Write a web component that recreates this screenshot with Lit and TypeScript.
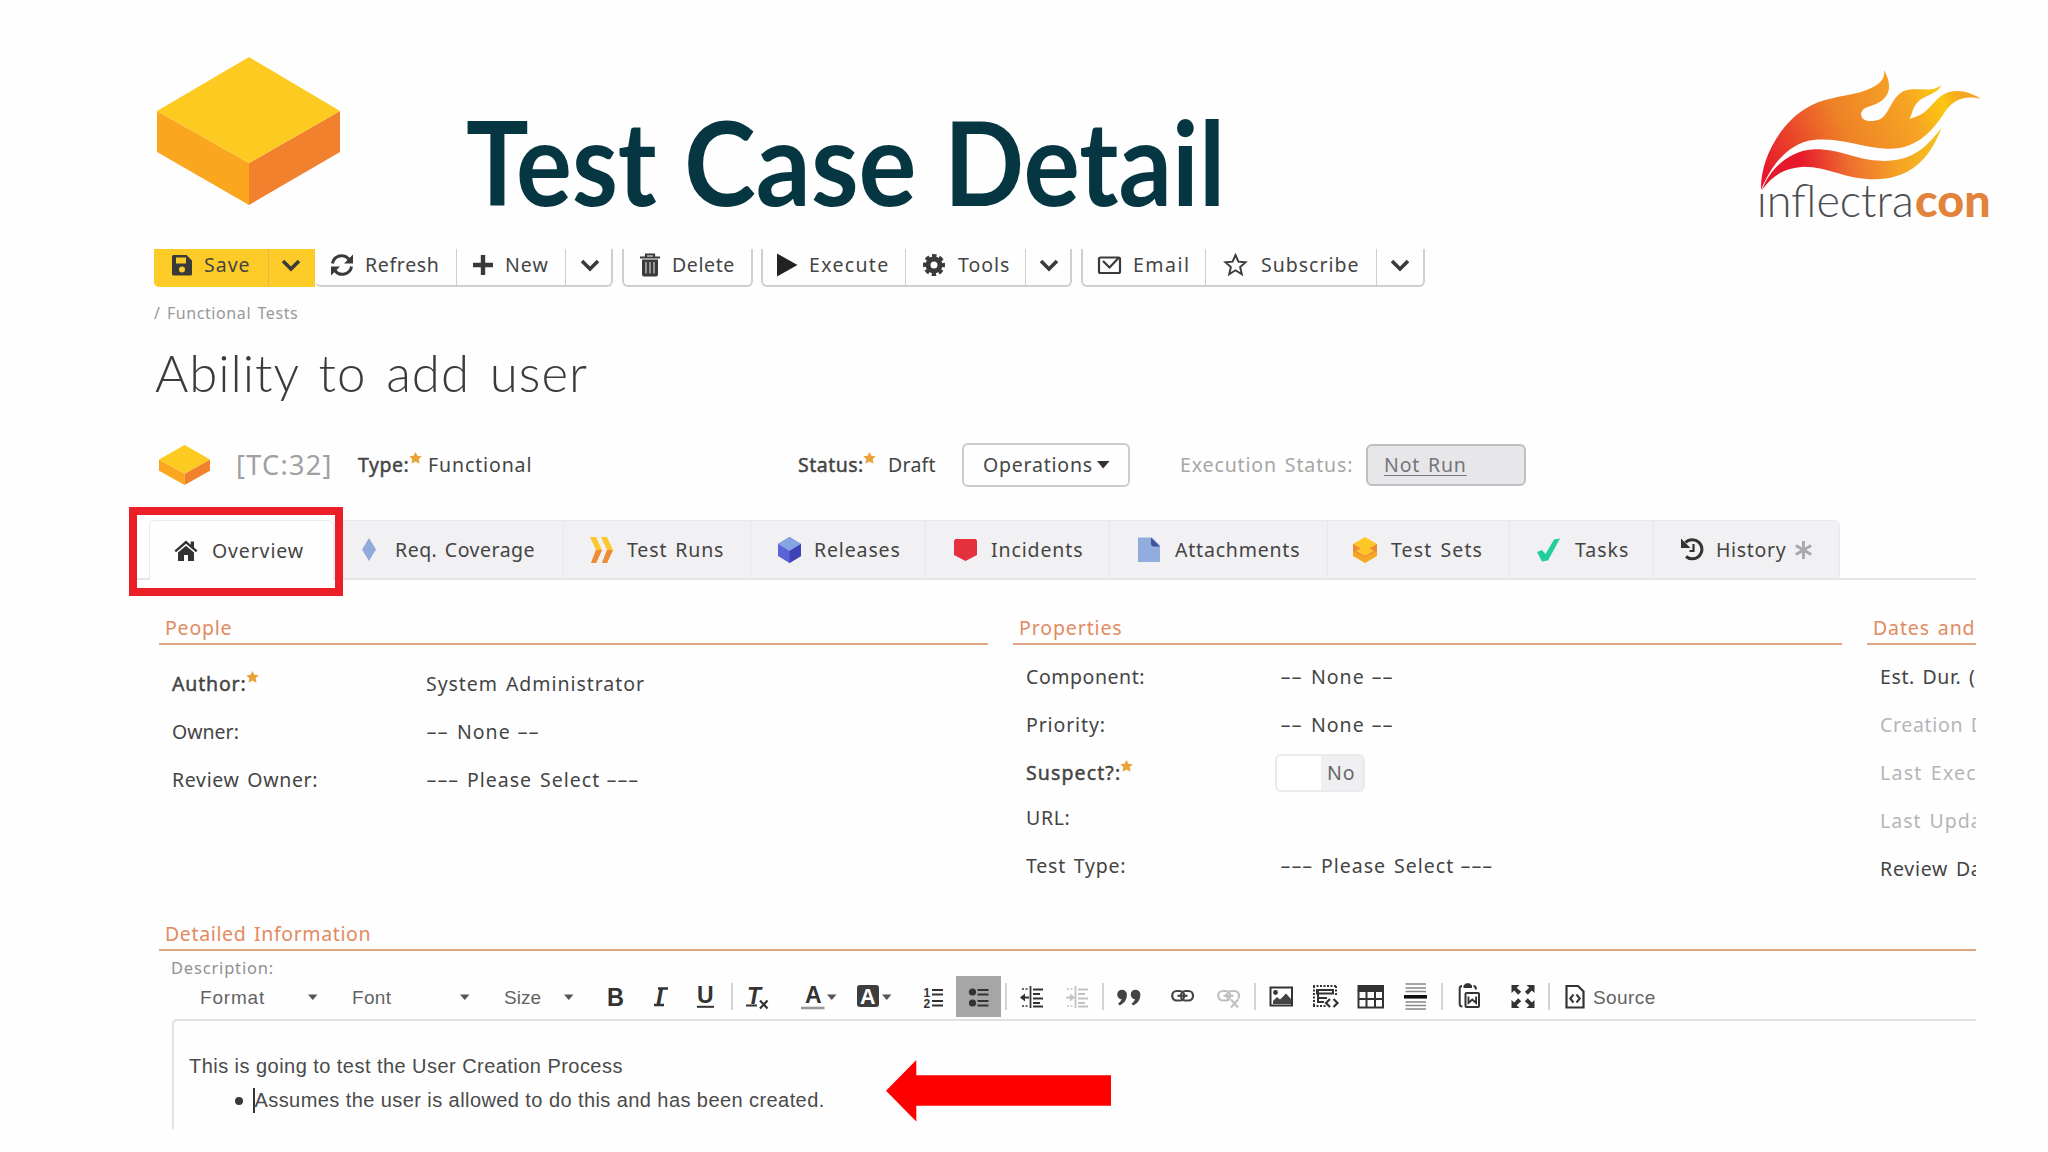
import { LitElement, html, svg, css } from "lit";
import { customElement, property } from "lit/decorators.js";
import { styleMap } from "lit/directives/style-map.js";

/** Single-line text tracked (or stretched) so that it fills a given width. */
@customElement("fit-text")
class FitText extends LitElement {
  @property() text = "";
  @property({ type: Number }) w = 0;
  @property({ type: Boolean }) stretch = false;

  static styles = css`
    :host { display: inline-block; flex: none; white-space: pre; word-spacing: 0.1em; }
    .run { display: inline-block; margin-left: -1px; transform-origin: 0 50%; text-decoration: inherit; }
  `;

  updated() {
    const run = this.renderRoot.querySelector(".run") as HTMLElement;
    this.style.width = this.w + "px";
    run.style.letterSpacing = "0px";
    run.style.transform = "none";
    const natural = run.offsetWidth;
    if (this.stretch) run.style.transform = `scaleX(${this.w / natural})`;
    else run.style.letterSpacing = (this.w + 1 - natural) / Math.max(1, this.text.length - 1) + "px";
  }

  render() {
    return html`<span class="run">${this.text}</span>`;
  }
}

const t = (text: string, w: number, cls = "") => html`<fit-text class=${cls} .text=${text} .w=${w}></fit-text>`;
const wide = (text: string, w: number) => html`<fit-text .text=${text} .w=${w} stretch></fit-text>`;
const dashed = (dashes: string, dw: number, text: string, w: number) =>
  html`<div class="dashed">${wide(dashes, dw)}${t(text, w)}${wide(dashes, dw)}</div>`;
const none = () => dashed("--", 23, "None", 52);
const select = () => dashed("---", 33, "Please Select", 131);

const INK = "#3a3a3a";

const chevron = svg`<path d="M2 8l8 8 8-8" fill="none" stroke=${INK} stroke-width="3.6"/>`;
const starIcon = html`<svg class="req" width="13" height="12" viewBox="0 0 13 12"><path d="M6.5 0l1.9 3.8 4.3.5-3 2.9.8 4.6-4-2.2-4 2.2.8-4.6-3-2.9 4.3-.5z" fill="#e8a33a"/></svg>`;

const barIcons: Record<string, unknown> = {
  save: svg`<path d="M1.5 2h13L20 7.500V21q0 1.500-1.500 1.500h-17Q0 22.500 0 21V3.500Q0 2 1.500 2z" fill=${INK}/><path d="M4 4.500h10v6H4z" fill="#fdcb27"/><circle cx="10" cy="16.500" r="3" fill="#fdcb27"/>`,
  refresh: svg`<g fill="none" stroke=${INK} stroke-width="3"><path d="M2.500 10.500A9.200 9.200 0 0 1 19 6.500"/><path d="M21.500 13.500A9.200 9.200 0 0 1 5 17.500"/></g><path d="M23 1.500v9h-9zM1 22.500v-9h9z" fill=${INK}/>`,
  plus: svg`<path d="M10 2v20M0 12h20" stroke=${INK} stroke-width="4.400"/>`,
  trash: svg`<path d="M0 4.500h20M6 4V1.500h8V4" fill="none" stroke=${INK} stroke-width="2.200"/><path d="M2 6.500h16v15q0 2-2 2H4q-2 0-2-2z" fill=${INK}/><path d="M6 9v11.500M10 9v11.500M14 9v11.500" stroke="#bbb" stroke-width="1.400"/>`,
  play: svg`<path d="M0 0.500L20.500 12 0 23.500z" fill="#222"/>`,
  gear: svg`<circle cx="11" cy="12" r="6" fill="none" stroke=${INK} stroke-width="5"/><circle cx="11" cy="12" r="9.200" fill="none" stroke=${INK} stroke-width="3.600" stroke-dasharray="4.400 2.825" stroke-dashoffset="2.200"/>`,
  mail: svg`<rect x="1" y="4.500" width="21" height="15.500" rx="1.500" fill="none" stroke=${INK} stroke-width="2.200"/><path d="M5 8l6.500 6.500L20.500 5" fill="none" stroke=${INK} stroke-width="2.200"/>`,
  star: svg`<path d="M11.500 2l2.900 6.600 7.200.6-5.500 4.800 1.700 7.200-6.300-3.900-6.300 3.900 1.700-7.200L1.400 9.200l7.200-.6z" fill="none" stroke=${INK} stroke-width="1.900"/>`,
};

interface Btn { icon?: string; pad: number; iw: number; label?: string; lw?: number; w: number; }

const groups: { gap: number; left: boolean; items: Btn[] }[] = [
  { gap: 0, left: false, items: [
    { icon: "refresh", pad: 15, iw: 36, label: "Refresh", lw: 73, w: 142 },
    { icon: "plus", pad: 16, iw: 33, label: "New", lw: 42, w: 109 },
    { pad: 14, iw: 20, w: 45 } ] },
  { gap: 9, left: true, items: [{ icon: "trash", pad: 16, iw: 33, label: "Delete", lw: 61, w: 127 }] },
  { gap: 8, left: true, items: [
    { icon: "play", pad: 14, iw: 33, label: "Execute", lw: 78, w: 143 },
    { icon: "gear", pad: 17, iw: 36, label: "Tools", lw: 50, w: 120 },
    { pad: 13, iw: 20, w: 44 } ] },
  { gap: 9, left: true, items: [
    { icon: "mail", pad: 15, iw: 36, label: "Email", lw: 55, w: 123 },
    { icon: "star", pad: 18, iw: 38, label: "Subscribe", lw: 97, w: 171 },
    { pad: 13, iw: 20, w: 46 } ] },
];

const tabIcons: Record<string, unknown> = {
  home: svg`<path d="M12 2.500L.5 12.500l1.500 1.700L12 5.700l10 8.500 1.500-1.700-3.500-3V3.500h-3.300v3.200z" fill="#333"/><path d="M4 14.500l8-6.700 8 6.700V23h-6v-6h-4v6H4z" fill="#333"/>`,
  req: svg`<path d="M7 1l7 11.500L7 24 0 12.500z" fill="#92a9dc"/>`,
  runs: svg`<path d="M0 0h6l6 13-6 13H1l5-13zM11 0h6l6 13-6 13h-5l5-13z" fill="#fcc72e"/><path d="M6 13h6l-6 13H1zM17 13h6l-6 13h-5z" fill="#ee8a3a"/>`,
  release: svg`<path d="M11.500 0L23 7v12l-11.500 7L0 19V7z" fill="#5b63d6"/><path d="M11.500 0L23 7l-11.500 7L0 7z" fill="#86a5e3"/><path d="M23 7v12l-11.500 7V14z" fill="#3e44b8"/>`,
  incident: svg`<path d="M1.500 2h20L23 3.500V18l-11.500 6L0 18V3.500z" fill="#e5303d"/>`,
  attach: svg`<path d="M0 .5h14l8 8V25H0z" fill="#91addd"/><path d="M13 .5l9 9h-6q-3 0-3-3z" fill="#41519a"/>`,
  sets: svg`<path d="M0 13l12 6 12-6v6l-12 7-12-7z" fill="#f7a823"/><path d="M0 7v7l12 6.500L24 14V7z" fill="#ef8a35"/><path d="M3 14l9-5 9 5-9 5z" fill="#fcc52a"/><path d="M12 0l12 7-12 7L0 7z" fill="#fdc727"/>`,
  task: svg`<path d="M0 15l5-2 3.500 4L17 2.500l6-1L11 23.500l-6 1z" fill="#20cf9c"/>`,
  history: svg`<path d="M4.500 5.500A9.600 9.600 0 1 1 5 19.500" fill="none" stroke="#333" stroke-width="3"/><path d="M0 1.500v9.500h9.500z" fill="#333"/><path d="M12.500 7v7h-4" fill="none" stroke="#333" stroke-width="2.200"/>`,
};

const tabs = [
  { icon: "req", pad: 28, iw: 34, label: "Req. Coverage", lw: 139, w: 230 },
  { icon: "runs", pad: 26, iw: 38, label: "Test Runs", lw: 95, w: 187 },
  { icon: "release", pad: 27, iw: 37, label: "Releases", lw: 85, w: 175 },
  { icon: "incident", pad: 28, iw: 38, label: "Incidents", lw: 90, w: 184 },
  { icon: "attach", pad: 28, iw: 38, label: "Attachments", lw: 124, w: 218 },
  { icon: "sets", pad: 25, iw: 39, label: "Test Sets", lw: 90, w: 182 },
  { icon: "task", pad: 27, iw: 39, label: "Tasks", lw: 52, w: 144 },
  { icon: "history", pad: 27, iw: 36, label: "History", lw: 69, w: 186 },
];

const D = "#333";
const caret = (x = 0) => svg`<path d="M${x} 18.500h9.500l-4.750 5.500z" fill="#555"/>`;
const sep = svg`<path d="M1 7v27" stroke="#c4c4c4" stroke-width="1.500"/>`;
const listLines = svg`<path d="M9 14h11M9 18.500h11M9 25h11M9 29.500h11" stroke=${D} stroke-width="2"/>`;
const dent = (c: string) => svg`<g stroke=${c} fill="none"><path d="M10.500 10v22" stroke-width="1.800"/><path d="M13 13.500h10M13 18h7M13 22.500h10M13 27h7M13 30.500h10" stroke-width="1.800"/><path d="M2 13h7M2 30h7" stroke-width="1.500" stroke-dasharray="2 1.500"/><path d="M1 21.500h8" stroke-width="2"/></g>`;
const chain = (c: string) => svg`<g fill="none" stroke=${c} stroke-width="2.200"><rect x="1.200" y="15" width="12" height="9.500" rx="4.500"/><rect x="10" y="15" width="12" height="9.500" rx="4.500"/><path d="M6.500 19.800h10" stroke-width="2.200"/></g>`;

/** Editor toolbar: cell width followed by its drawing. */
const tools: [number, unknown][] = [
  [44, caret()],
  [46, svg`<text class="glyph" x="-1" y="30" font-size="26" font-weight="700" textLength="17" lengthAdjust="spacingAndGlyphs">B</text>`],
  [43, svg`<text class="glyph" x="2" y="29" font-size="24" font-weight="700" font-style="italic">I</text><path d="M4 12.500h10M0 29h10" stroke=${D} stroke-width="2.400"/>`],
  [34, svg`<text class="glyph" x="0" y="27" font-size="23" font-weight="700">U</text><path d="M0 30.800h17" stroke=${D} stroke-width="2"/>`],
  [15, sep],
  [55, svg`<text class="glyph" x="1" y="28" font-size="23" font-weight="700" font-style="italic">T</text><path d="M0 29.500h11" stroke=${D} stroke-width="2"/><path d="M14 24.500l7.500 8M21.500 24.500l-7.500 8" stroke=${D} stroke-width="2.200"/>`],
  [55, svg`<text class="glyph" x="4" y="27" font-size="23" font-weight="700" fill="#555">A</text><path d="M0 32h23.500" stroke="#999" stroke-width="2.600"/>${caret(26)}`],
  [67, svg`<rect x="1" y="9" width="22" height="22" rx="3" fill="#3d3d3d"/><text class="glyph white" x="4" y="27.500" font-size="21.500" font-weight="700">A</text>${caret(26)}`],
  [33, svg`<text class="glyph" x="0.500" y="20.500" font-size="12" font-weight="700">1</text><text class="glyph" x="0.500" y="32" font-size="12" font-weight="700">2</text>${listLines}`],
];
const tools2: [number, unknown][] = [
  [15, svg`<path d="M1 7v27" stroke="#c4c4c4" stroke-width="1.500"/>`],
  [45, svg`${dent(D)}<path d="M5 17.500l-5 4 5 4z" fill=${D}/>`],
  [37, svg`${dent("#c2c2c2")}<path d="M5 17.500l5 4-5 4z" fill="#c2c2c2"/>`],
  [15, sep],
  [54, svg`<g fill="#444"><circle cx="5" cy="18.500" r="4.800"/><path d="M9.800 18q.4 8-7 11.500l-1.800-1.700q4-2.800 3.500-6z"/><circle cx="18.500" cy="18.500" r="4.800"/><path d="M23.300 18q.4 8-7 11.500l-1.800-1.700q4-2.800 3.500-6z"/></g>`],
  [46, chain("#444")],
  [37, svg`${chain("#c0c0c0")}<path d="M14 23l7 8M21 23l-7 8" stroke="#fff" stroke-width="5"/><path d="M14 23.500l7 8M21 23.500l-7 8" stroke="#c0c0c0" stroke-width="2"/>`],
  [15, sep],
  [43, svg`<rect x="1.500" y="11.500" width="21.500" height="18" fill="none" stroke=${D} stroke-width="2"/><circle cx="6.500" cy="16.500" r="2.400" fill=${D}/><path d="M4 28v-3l4-4 3 2.500 6-6 5 5.500v5z" fill="#444"/>`],
  [45, svg`<g fill="none" stroke=${D}><path d="M1 10h24M1 30h14M2 10v21M24 10v10" stroke-width="2" stroke-dasharray="2 1.500"/><path d="M5 14h16v3.500H5zM5 22h10M5 26h7M6 14v13" stroke-width="2"/><path d="M18 23l-4 4 4 4M21.500 23l4 4-4 4" stroke-width="2.200"/></g>`],
  [47, svg`<path d="M.5 9h26.500v6H.5z" fill=${D}/><path d="M1.500 15h24.500v16.500H1.500zM1.500 23h24.500M9.500 15v16.500M18 15v16.500" fill="none" stroke=${D} stroke-width="2"/>`],
  [37, svg`<path d="M1.500 8h20.500M1.500 12h20.500M1.500 15.500h20.500M1.500 26h20.500M1.500 29.500h20.500M1.500 33h20.500" stroke="#888" stroke-width="1.600"/><path d="M0 20.800h23" stroke="#111" stroke-width="3.600"/>`],
  [17, sep],
  [53, svg`<g fill="none" stroke=${D} stroke-width="2"><path d="M4 10q-2.300 0-2.300 2.500V28q0 2.500 2.800 2.500"/><path d="M15.500 10q2.500 0 2.500 3.500"/><rect x="7.500" y="17" width="13.500" height="14" rx="1"/><path d="M10.500 20.500v6.500l3.800-3.500 3.800 3.500v-6.500" stroke-width="1.800"/></g><path d="M5.500 12V9.500L8 7.200h3.500L14 9.500V12z" fill=${D}/>`],
  [37, svg`<g fill=${D}><path d="M.5 9h8l-2.800 2.800 4.500 4-3 3-4-4.300L.5 17z"/><path d="M23.500 9h-8l2.800 2.800-4.500 4 3 3 4-4.300 2.700 2.500z"/><path d="M.5 32h8l-2.800-2.800 4.500-4-3-3-4 4.300L.5 24z"/><path d="M23.500 32h-8l2.800-2.800-4.500-4 3-3 4 4.300 2.700-2.500z"/></g>`],
  [17, sep],
  [29, svg`<path d="M1.500 10h11.500l5.500 5.500v16h-17z" fill="none" stroke=${D} stroke-width="2.200"/><path d="M8.500 18.500l-3.300 4 3.300 4M11.500 18.500l3.300 4-3.300 4" fill="none" stroke=${D} stroke-width="2"/>`],
];

@customElement("app-root")
class AppRoot extends LitElement {
  static styles = css`
    :host {
      display: block; position: relative; width: 2048px; height: 1152px; overflow: hidden;
      background: #fefefe; color: #444;
      font-family: "Noto Sans", "Open Sans", sans-serif; font-size: 19.5px; line-height: 1;
    }
    * { box-sizing: border-box; }
    svg { display: block; flex: none; overflow: visible; }
    .header { display: flex; height: 249px; align-items: flex-start; }
    .cube { margin: 57px 0 0 157px; }
    .title {
      display: flex; gap: 27px; margin: 104px 0 0 127px; font-family: Lato, sans-serif;
      font-weight: 700; font-size: 116px; line-height: 116px; color: #053641;
    }
    .brand { margin: 50px 38px 0 auto; }
    .thin { font-family: Lato, sans-serif; font-weight: 300; fill: #4c4d52; }
    .thick { font-family: Lato, sans-serif; font-weight: 900; fill: #e2833b; }
    .shot { width: 1847px; height: 880px; margin-left: 129px; overflow: hidden; }

    .bar { display: flex; height: 38px; padding-left: 25px; }
    .save { display: flex; width: 161px; background: #fdcb27; border-radius: 0 0 0 5px; }
    .group { display: flex; border: solid #d0ced2; border-width: 0 2px 2px 0; border-radius: 0 0 6px 6px; }
    .group.left { border-left-width: 2px; }
    .btn { display: flex; align-items: center; flex: none; height: 37px; padding-bottom: 6px; border-right: 1.5px solid #cfcdd1; }
    .group .btn:last-child { border-right: 0; }
    .save .btn { border-color: #e3b84a; }
    .save .btn:last-child { border-right: 0; }

    .crumb { display: flex; align-items: center; height: 52px; padding-left: 26px; font-size: 16px; color: #999; }
    .name { display: flex; align-items: center; height: 64px; padding-left: 27px; padding-top: 3px; font-family: Lato, sans-serif; font-weight: 300; font-size: 51px; color: #3b3b3f; }
    .meta { display: flex; align-items: center; height: 111px; margin-top: 6px; padding-left: 30px; }
    .tc { font-size: 27px; color: #a0a0a0; margin: 0 28px 0 27px; }
    .strong { -webkit-text-stroke: 0.45px #444; }
    .req { margin-bottom: 14px; align-self: center; }
    .ops { display: flex; align-items: center; width: 168px; height: 44px; margin-left: 26px; padding-left: 20px; gap: 5px; border: 2px solid #cdcbcf; border-radius: 6px; }
    .exec { color: #a6a6a6; margin: 0 14px 0 51px; }
    .notrun { display: flex; align-items: center; width: 160px; height: 42px; padding-left: 17px; background: #e7e6e9; border: 2px solid #c0bec3; border-radius: 6px; color: #77757a; }
    .under { text-decoration: underline; text-underline-offset: 3px; }

    .tabs { display: flex; height: 60px; }
    .rule { width: 20px; border-bottom: 2px solid #e6e4e8; }
    .rule.end { flex: 1; }
    .tab { display: flex; align-items: center; flex: none; padding-top: 1px; background: #f1f0f2; border-top: 1.5px solid #e9e8eb; border-bottom: 2px solid #e6e4e8; border-right: 1.5px solid #e8e6ea; }
    .tab.active { width: 185px; padding-top: 0; background: #fefefe; border: solid #ebeaed; border-width: 1.5px 1.5px 0 1.5px; padding-left: 24px; border-radius: 6px 6px 0 0; }
    .tab.last { border-radius: 0 6px 0 0; }
    .aster { margin-left: 9px; }

    .cols { display: grid; grid-template-columns: 829px 829px 829px; gap: 25px; height: 306px; margin-top: 31px; padding-left: 30px; }
    .head { display: flex; align-items: center; height: 34px; padding: 1px 0 0 7px; color: #e28a61; border-bottom: 2px solid #e0a583; }
    .rows { padding: 8px 0 0 14px; }
    .people .rows { padding-top: 15px; }
    .row { display: grid; grid-template-columns: 254px 1fr; align-items: center; height: 48px; }
    .row.short { height: 42px; }
    .row.tall { height: 54px; }
    .label { display: flex; align-items: center; }
    .dashed { display: flex; gap: 8px; }
    .faint { color: #b5b5b8; }
    .toggle { display: flex; width: 90px; height: 38px; margin-left: -6px; border: 2px solid #eae9ec; border-radius: 6px; background: linear-gradient(90deg, #fff 0 44px, #efeef0 44px); align-items: center; padding-left: 51px; color: #666; }

    .detail { margin-left: 30px; }
    .desc { height: 25px; padding: 8px 0 0 43px; font-size: 16.5px; line-height: 18px; color: #918e95; }
    .tools { display: flex; align-items: center; height: 41px; padding-left: 72px; font-family: "Liberation Sans", Arial, sans-serif; font-size: 19px; color: #636363; }
    .tools fit-text { padding-top: 2px; }
    .on { width: 45px; height: 41px; background: #a6a6a6; }
    .glyph { font-family: "Liberation Sans", Arial, sans-serif; fill: #333; }
    .white { fill: #fff; }
    .editor { height: 112px; margin: 2px 0 0 43px; padding: 28px 0 0 16px; border: solid #e2e1e5; border-width: 2px 0 0 2px; border-radius: 5px 0 0 0; font-family: "Liberation Sans", Arial, sans-serif; font-size: 20px; line-height: 34px; color: #4a4a4a; }
    .line { display: flex; height: 34px; align-items: center; }
    .line fit-text { word-spacing: 0; }
    .bullet { padding-left: 45px; }
    .dot { width: 8px; height: 8px; border-radius: 50%; background: #3a3a3a; margin-right: 10px; margin-top: 1px; }
    .cursor { width: 1.500px; height: 25px; background: #333; margin-right: 1px; }

    .mark { position: absolute; left: 129px; top: 507px; width: 214px; height: 89px; border: 8px solid #ea1f28; }
    .arrow { position: absolute; left: 886px; top: 1060px; }
  `;

  cube(w: number, h: number, cls = "") {
    return html`<svg class=${cls} width=${w} height=${h} viewBox="0 0 183 148" preserveAspectRatio="none">
      <path d="M0 54l92 52v42L0 95z" fill="#faa61f"/>
      <path d="M183 54l-91 52v42l91-53z" fill="#f1812d"/>
      <path d="M92 0l91 54-91 52L0 54z" fill="#fdca22"/>
    </svg>`;
  }

  button(b: Btn) {
    return html`<div class="btn" style=${styleMap({ width: b.w + "px", paddingLeft: b.pad + "px" })}>
      <svg width=${b.iw} height="24" viewBox="0 0 ${b.iw} 24">${b.icon ? barIcons[b.icon] : chevron}</svg>
      ${b.label ? t(b.label, b.lw!) : ""}
    </div>`;
  }

  row(label: string, lw: number, value: unknown = "", opts: { req?: boolean; cls?: string } = {}) {
    return html`<div class="row ${opts.cls ?? ""}">
      <div class="label">${t(label, lw, opts.req ? "strong" : "")}${opts.req ? starIcon : ""}</div>
      <div>${value}</div>
    </div>`;
  }

  cell([w, art]: [number, unknown]) {
    return html`<svg width=${w} height="41" viewBox="0 0 ${w} 41">${art}</svg>`;
  }

  render() {
    return html`
      <div class="header">
        ${this.cube(183, 148, "cube")}
        <div class="title">${wide("Test", 191)}${wide("Case", 233)}${wide("Detail", 281)}</div>
        <svg class="brand" width="270" height="190" viewBox="0 0 810 570">
          <defs>
            <linearGradient id="flame" gradientUnits="userSpaceOnUse" x1="80" y1="380" x2="660" y2="130">
              <stop offset="0" stop-color="#e5182c"/><stop offset=".2" stop-color="#ea4a2a"/>
              <stop offset=".42" stop-color="#ee8127"/><stop offset=".75" stop-color="#f6a423"/>
              <stop offset=".9" stop-color="#fbc70f"/><stop offset="1" stop-color="#f5a623"/>
            </linearGradient>
            <linearGradient id="ember" gradientUnits="userSpaceOnUse" x1="180" y1="330" x2="600" y2="280">
              <stop offset="0" stop-color="#e5182c"/><stop offset=".35" stop-color="#ee7030"/>
              <stop offset=".7" stop-color="#f6a423"/><stop offset="1" stop-color="#f3c31c"/>
            </linearGradient>
          </defs>
          <path fill="url(#flame)" d="M63 420C60 330 120 215 210 168C270 137 330 140 380 120C425 102 435 85 432 60C452 95 455 130 425 152C400 172 370 165 363 190C362 215 395 218 420 208C455 190 455 120 515 118C555 116 580 125 604 105C595 130 560 135 540 150C515 170 520 190 508 206C560 195 570 165 600 140C640 110 690 125 722 146C670 135 640 150 615 185C580 240 530 300 440 296C360 292 300 262 220 270C150 278 95 340 63 420Z"/>
          <path fill="url(#ember)" d="M66 420C90 355 150 300 225 298C310 298 340 330 430 333C520 333 560 290 604 234C580 300 530 385 410 388C310 388 270 350 190 350C130 355 100 375 66 420Z"/>
          <text class="thin" x="50" y="500" font-size="138" textLength="471" lengthAdjust="spacingAndGlyphs">ınflectra</text>
          <text class="thick" x="525" y="500" font-size="134" textLength="227" lengthAdjust="spacingAndGlyphs">con</text>
        </svg>
      </div>

      <div class="shot">
        <div class="bar">
          <div class="save">
            ${this.button({ icon: "save", pad: 18, iw: 33, label: "Save", lw: 45, w: 115 })}
            ${this.button({ pad: 12, iw: 20, w: 46 })}
          </div>
          ${groups.map((g) => html`<div class="group ${g.left ? "left" : ""}" style=${styleMap({ marginLeft: g.gap + "px" })}>${g.items.map((b) => this.button(b))}</div>`)}
        </div>
        <div class="crumb">${t("/ Functional Tests", 143)}</div>
        <div class="name">${t("Ability to add user", 431)}</div>

        <div class="meta">
          ${this.cube(51, 40)}
          ${t("[TC:32]", 94, "tc")}
          ${t("Type:", 50, "strong")}${starIcon}
          <svg width="7" height="1"></svg>${t("Functional", 102)}
          <svg width="268" height="1"></svg>${t("Status:", 64, "strong")}${starIcon}
          <svg width="13" height="1"></svg>${t("Draft", 47)}
          <div class="ops">${t("Operations", 108)}<svg width="13" height="8" viewBox="0 0 13 8"><path d="M0 0h12.500L6.200 7.500z" fill="#333"/></svg></div>
          ${t("Execution Status:", 171, "exec")}
          <div class="notrun">${t("Not Run", 81, "under")}</div>
        </div>

        <div class="tabs">
          <div class="rule"></div>
          <div class="tab active"><svg width="39" height="26" viewBox="0 0 39 26">${tabIcons.home}</svg>${t("Overview", 90)}</div>
          ${tabs.map((tab) => html`<div class="tab ${tab.icon === "history" ? "last" : ""}" style=${styleMap({ width: tab.w + "px", paddingLeft: tab.pad + "px" })}>
            <svg width=${tab.iw} height="26" viewBox="0 0 ${tab.iw} 26">${tabIcons[tab.icon]}</svg>${t(tab.label, tab.lw)}
            ${tab.icon === "history" ? html`<svg class="aster" width="17" height="18" viewBox="0 0 18 20"><path d="M9 0v20M.5 5l17 10M17.500 5l-17 10" stroke="#a9a9ac" stroke-width="3.200"/></svg>` : ""}
          </div>`)}
          <div class="rule end"></div>
        </div>

        <div class="cols">
          <div class="people">
            <div class="head">${t("People", 66)}</div>
            <div class="rows">
              ${this.row("Author:", 73, t("System Administrator", 217), { req: true })}
              ${this.row("Owner:", 66, none())}
              ${this.row("Review Owner:", 145, select())}
            </div>
          </div>
          <div>
            <div class="head">${t("Properties", 102)}</div>
            <div class="rows">
              ${this.row("Component:", 118, none())}
              ${this.row("Priority:", 78, none())}
              ${this.row("Suspect?:", 93, html`<div class="toggle">${t("No", 27)}</div>`, { req: true })}
              ${this.row("URL:", 43, "", { cls: "short" })}
              ${this.row("Test Type:", 99, select(), { cls: "tall" })}
            </div>
          </div>
          <div>
            <div class="head">${t("Dates and", 101)}</div>
            <div class="rows">
              ${this.row("Est. Dur. (", 94)}
              ${this.row("Creation D", 104, "", { cls: "faint" })}
              ${this.row("Last Exec", 95, "", { cls: "faint" })}
              ${this.row("Last Upda", 101, "", { cls: "faint" })}
              ${this.row("Review Da", 101)}
            </div>
          </div>
        </div>

        <div class="head detail">${t("Detailed Information", 205)}</div>
        <div class="desc">${t("Description:", 101)}</div>
        <div class="tools">
          ${t("Format", 63)}<svg width="44" height="1"></svg>${this.cell([45, caret()])}
          ${t("Font", 38)}<svg width="69" height="1"></svg>${this.cell([45, caret()])}
          ${t("Size", 36)}<svg width="23" height="1"></svg>
          ${tools.map((c) => this.cell(c))}
          <div class="on"><svg width="45" height="41" viewBox="-12.500 0 45 41"><circle cx="4" cy="16" r="3.600" fill=${D}/><circle cx="4" cy="27" r="3.600" fill=${D}/>${listLines}</svg></div>
          <svg width="4" height="1"></svg>
          ${tools2.map((c) => this.cell(c))}
          ${t("Source", 61)}
        </div>
        <div class="editor">
          <div class="line">${t("This is going to test the User Creation Process", 432)}</div>
          <div class="line bullet"><i class="dot"></i><i class="cursor"></i>${t("Assumes the user is allowed to do this and has been created.", 569)}</div>
        </div>
      </div>

      <div class="mark"></div>
      <svg class="arrow" width="225" height="62" viewBox="0 0 225 62"><path d="M0 30.700L30.300 0v15.300H225v30.400H30.300V61.500z" fill="#fe0000"/></svg>
    `;
  }
}
